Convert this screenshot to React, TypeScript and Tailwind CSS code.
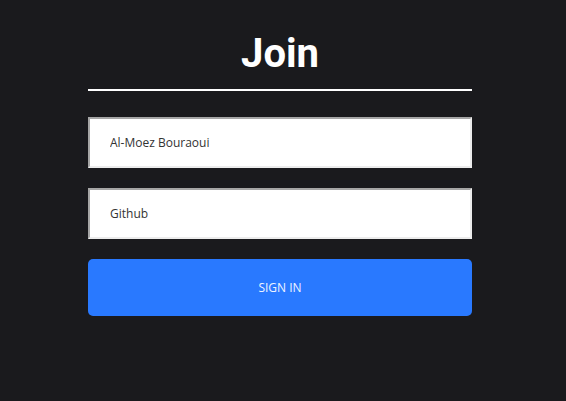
import React from 'react';

export default function App() {
  return (
    <div className="min-h-[401px] w-full bg-[#1a1a1d] font-['Open_Sans',sans-serif]">
      <div className="ml-[88px] w-[384px] pt-[30px]">
        <h1 className="border-b-2 border-white pb-[11px] text-center font-['Roboto',sans-serif] text-[40px] font-bold leading-[48px] text-white">
          Join
        </h1>
        <div className="mt-[26px] flex flex-col gap-5">
          <input
            className="h-[51px] w-full border-2 border-t-[#a6a6a6] border-l-[#a6a6a6] border-r-[#ececec] border-b-[#ececec] bg-white px-5 text-[12px] text-[#333] outline-none"
            defaultValue="Al-Moez Bouraoui"
          />
          <input
            className="h-[51px] w-full border-2 border-t-[#a6a6a6] border-l-[#a6a6a6] border-r-[#ececec] border-b-[#ececec] bg-white px-5 text-[12px] text-[#333] outline-none"
            defaultValue="Github"
          />
          <button className="h-[57px] w-full rounded-[5px] bg-[#2979ff] text-[12px] uppercase text-[#eef3ff]">
            Sign In
          </button>
        </div>
      </div>
    </div>
  );
}
